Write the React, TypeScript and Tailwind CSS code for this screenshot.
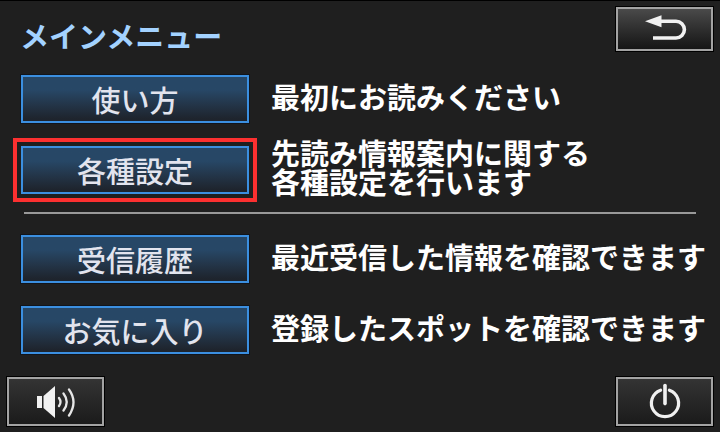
type MenuItem = {
  label: string;
  description: string;
  selected?: boolean;
};

const mainItems: MenuItem[] = [
  { label: "使い方", description: "最初にお読みください" },
  {
    label: "各種設定",
    description: "先読み情報案内に関する\n各種設定を行います",
    selected: true,
  },
];

const subItems: MenuItem[] = [
  { label: "受信履歴", description: "最近受信した情報を確認できます" },
  { label: "お気に入り", description: "登録したスポットを確認できます" },
];

const iconButton =
  "flex w-[97px] items-center justify-center border-2 border-[#a3a3a3] bg-linear-to-b outline outline-black";

function MenuRow({ item }: { item: MenuItem }) {
  return (
    <li className="flex min-h-16 items-center gap-[22px]">
      <button
        className={`h-12 w-[228px] shrink-0 border-2 border-[#3b8fe0] bg-linear-to-b from-[#274766] from-30% to-[#1e242d] to-95% text-[29px] leading-none font-medium whitespace-nowrap text-[#e2e4ee] ${
          item.selected ? "outline-4 outline-offset-4 outline-[#fc3030]" : "outline outline-[#11151c]"
        }`}
      >
        {item.label}
      </button>
      <p className="pb-[6px] text-[29px] leading-[29px] font-bold whitespace-pre text-white">
        {item.description}
      </p>
    </li>
  );
}

function BackIcon() {
  return (
    <svg width="44" height="28" viewBox="0 0 44 28" fill="none">
      <path d="M17 6.2H33A8.4 8.4 0 0 1 33 23H10" stroke="#f2f2f2" strokeWidth="3.6" />
      <path d="M2 6.2L18.5 0.2V12.2Z" fill="#f2f2f2" />
    </svg>
  );
}

function SpeakerIcon() {
  return (
    <svg width="40" height="34" viewBox="0 0 40 34" fill="none">
      <path d="M1 11H6V23H1Z" fill="#f2f2f2" />
      <path d="M7.5 11L19 1V33L7.5 23Z" fill="#f2f2f2" />
      <path
        d="M23 13Q26 17 23 21M27.5 8.5Q34 17 27.5 25.5M33 4.5Q42 17 33 30.5"
        stroke="#e6e6e6"
        strokeWidth="2.3"
        strokeLinecap="round"
      />
    </svg>
  );
}

function PowerIcon() {
  return (
    <svg width="34" height="38" viewBox="0 0 34 38" fill="none" stroke="#f0f0f0">
      <path d="M12.6 7.2A13.6 13.6 0 1 0 21.4 7.2" strokeWidth="3.2" strokeLinecap="round" />
      <path d="M17 2.6V20.6" strokeWidth="3.6" strokeLinecap="round" />
    </svg>
  );
}

export default function App() {
  return (
    <main
      lang="ja"
      className="flex min-h-screen flex-col border-t border-black bg-[#1f1f1f] font-['Noto_Sans_CJK_JP',sans-serif]"
    >
      {/* Title bar */}
      <header className="flex items-start justify-between pt-[6px] pr-[7px] pb-4 pl-5">
        <h1 className="pt-[14px] text-[29px] leading-[29px] font-bold text-[#a3d2ff]">メインメニュー</h1>
        <button aria-label="戻る" className={`${iconButton} h-11 from-[#4a4a4a] to-[#161616]`}>
          <BackIcon />
        </button>
      </header>

      {/* Menu */}
      <nav className="pl-[21px]">
        <ul className="space-y-[7px]">
          {mainItems.map((item) => (
            <MenuRow key={item.label} item={item} />
          ))}
        </ul>
        <hr className="mt-[10px] mr-6 mb-[13px] ml-[3px] border-t-2 border-[#999999]" />
        <ul className="space-y-[7px]">
          {subItems.map((item) => (
            <MenuRow key={item.label} item={item} />
          ))}
        </ul>
      </nav>

      {/* Bottom controls */}
      <footer className="mt-auto flex justify-between pr-[7px] pb-[6px] pl-[7px]">
        <button aria-label="音量" className={`${iconButton} h-[49px] from-[#343434] to-[#1b1b1b]`}>
          <SpeakerIcon />
        </button>
        <button aria-label="電源" className={`${iconButton} h-[49px] from-[#343434] to-[#1b1b1b]`}>
          <PowerIcon />
        </button>
      </footer>
    </main>
  );
}
